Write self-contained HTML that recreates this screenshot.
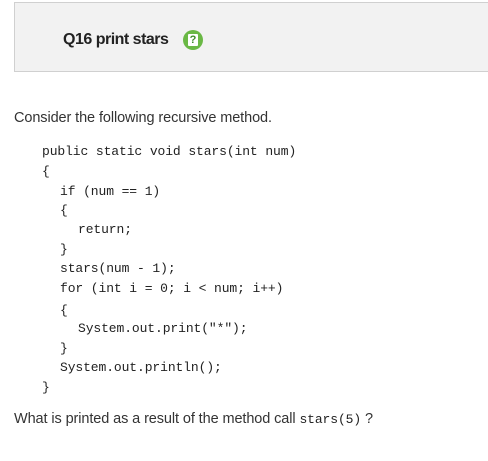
<!DOCTYPE html>
<html><head><meta charset="utf-8"><style>
body{margin:0;width:488px;height:461px;background:#fff;position:relative;overflow:hidden;font-family:"Liberation Sans",sans-serif;color:#333}
.hdr{position:absolute;left:14px;top:2px;width:480px;height:70px;background:#f2f2f2;border:1px solid #d0d0d0;box-sizing:border-box}
.t{position:absolute;left:63px;top:31px;font-size:16px;font-weight:bold;color:#222;letter-spacing:-0.5px}
.ic{position:absolute;left:183px;top:30px;width:20px;height:20px;border-radius:50%;background:#6ab845}
.ic i{position:absolute;left:5px;top:4px;width:10px;height:12px;background:#fff;border-radius:1px}
.ic b{position:absolute;left:5px;top:4px;width:10px;font-size:11px;line-height:13px;text-align:center;color:#3f8c2a;font-style:normal}
.p{position:absolute;left:14px;font-size:14.5px;color:#333;letter-spacing:-0.1px}
.c{position:absolute;font-family:"Liberation Mono",monospace;font-size:13px;color:#222;white-space:pre;line-height:16px;letter-spacing:-0.1px}
</style></head><body>
<div class="hdr"></div>
<div class="t">Q16 print stars</div>
<div class="ic"><i></i><b>?</b></div>
<div class="p" style="top:110px">Consider the following recursive method.</div>
<div class="c" style="left:42px;top:144px">public static void stars(int num)</div>
<div class="c" style="left:42px;top:164px">{</div>
<div class="c" style="left:60px;top:184px">if (num == 1)</div>
<div class="c" style="left:60px;top:203px">{</div>
<div class="c" style="left:78px;top:222px">return;</div>
<div class="c" style="left:60px;top:242px">}</div>
<div class="c" style="left:60px;top:261px">stars(num - 1);</div>
<div class="c" style="left:60px;top:281px">for (int i = 0; i &lt; num; i++)</div>
<div class="c" style="left:60px;top:303px">{</div>
<div class="c" style="left:78px;top:321px">System.out.print("*");</div>
<div class="c" style="left:60px;top:341px">}</div>
<div class="c" style="left:60px;top:360px">System.out.println();</div>
<div class="c" style="left:42px;top:380px">}</div>
<div class="p" style="top:411px">What is printed as a result of the method call <span style="font-family:'Liberation Mono',monospace;font-size:13px;color:#222">stars(5)</span> ?</div>
</body></html>
